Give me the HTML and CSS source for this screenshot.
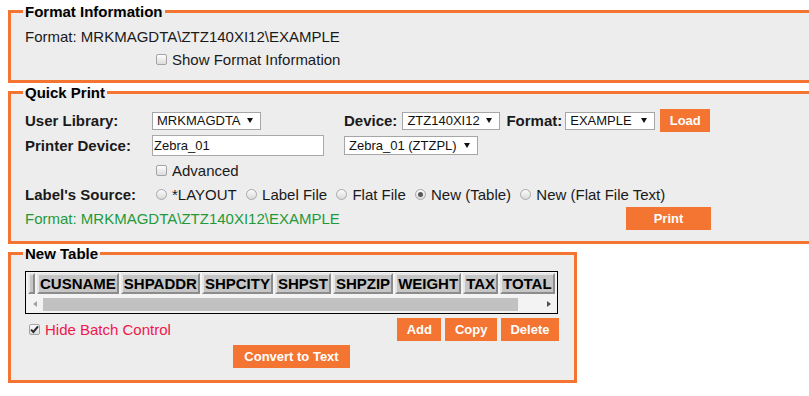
FILE: index.html
```html
<!DOCTYPE html>
<html>
<head>
    <meta charset="utf-8">
    <title>Quick Print</title>
    <link rel="stylesheet" href="styles.css">
</head>
<body>
<fieldset class="box box-wide box-info">
    <legend>Format Information</legend>
    <div class="line">Format: MRKMAGDTA\ZTZ140XI12\EXAMPLE</div>
    <div class="line"><span class="label"></span><span class="check"></span>Show Format Information</div>
</fieldset>

<fieldset class="box box-wide box-print">
    <legend>Quick Print</legend>
    <div class="line row">
        <span class="label">User Library:</span>
        <span class="select sel-lib">MRKMAGDTA</span>
        <span class="label-in dev">Device:</span>
        <span class="select sel-dev">ZTZ140XI12</span>
        <span class="label-in fmt">Format:</span>
        <span class="select sel-fmt">EXAMPLE</span>
        <button class="btn btn-load">Load</button>
    </div>
    <div class="line row">
        <span class="label">Printer Device:</span>
        <span class="text-in">Zebra_01</span>
        <span class="select sel-prt">Zebra_01 (ZTZPL)</span>
    </div>
    <div class="line row short"><span class="label"></span><span class="check"></span>Advanced</div>
    <div class="line row short">
        <span class="label">Label's Source:</span>
        <span class="opt first"><span class="radio"></span>*LAYOUT</span>
        <span class="opt"><span class="radio"></span>Label File</span>
        <span class="opt"><span class="radio"></span>Flat File</span>
        <span class="opt"><span class="radio on"></span>New (Table)</span>
        <span class="opt"><span class="radio"></span>New (Flat File Text)</span>
    </div>
    <div class="line row">
        <span class="ok">Format: MRKMAGDTA\ZTZ140XI12\EXAMPLE</span>
        <button class="btn btn-print">Print</button>
    </div>
</fieldset>

<fieldset class="box box-table">
    <legend>New Table</legend>
    <div class="grid">
        <div class="grid-head">
            <span class="th stub"></span>
            <span class="th">CUSNAME</span>
            <span class="th">SHPADDR</span>
            <span class="th">SHPCITY</span>
            <span class="th">SHPST</span>
            <span class="th">SHPZIP</span>
            <span class="th">WEIGHT</span>
            <span class="th">TAX</span>
            <span class="th">TOTAL</span>
        </div>
        <div class="scroll">
            <span class="scroll-btn"><span class="tri-l"></span></span>
            <span class="thumb"></span>
            <span class="scroll-btn"><span class="tri-r"></span></span>
        </div>
    </div>
    <div class="line batch">
        <span class="check on"><svg width="9" height="9" viewBox="0 0 9 9"><path d="M1 4.6 L3.4 7 L8 1.4" fill="none" stroke="#2b2b2b" stroke-width="2"/></svg></span>
        <span class="warn">Hide Batch Control</span>
        <span class="actions">
            <button class="btn">Add</button>
            <button class="btn">Copy</button>
            <button class="btn">Delete</button>
        </span>
    </div>
    <div class="convert"><button class="btn btn-wide">Convert to Text</button></div>
</fieldset>
</body>
</html>
```

FILE: styles.css
```css
*{box-sizing:border-box;}
html,body{overflow:hidden;}
body{margin:0 0 0 8px;font-family:Arial,"Liberation Sans",sans-serif;font-size:15px;color:#1a1a1a;background:#fff;}

/* fieldsets */
.box{margin:1px 0 0;padding:3px 14px 10px;border:3px solid #f47431;background:#ededed;min-width:0;}
.box legend{font-weight:bold;color:#000;padding:0 2px;margin-left:-2px;}
.box-wide{width:840px;}
.box-info{margin-top:3px;padding-top:4.5px;padding-bottom:9.5px;}
.box-print{padding-top:7px;padding-bottom:10px;}
.box-table{width:569px;padding-top:9px;padding-bottom:12px;}

.line{display:flex;align-items:center;height:23px;white-space:nowrap;}
.row{height:25px;width:686px;}
.row.short{height:24px;}
.label{width:127px;flex:none;font-weight:bold;}
.label-in{font-weight:bold;}
.dev{margin-left:83px;margin-right:5px;}
.fmt{margin-left:6px;margin-right:3px;}

/* form pieces */
.check{width:11px;height:11px;flex:none;margin:0 5px 0 4px;border:1px solid #a3a3a3;border-radius:2px;background:linear-gradient(#fcfcfc,#dddddd);display:flex;align-items:center;justify-content:center;}
.radio{width:11px;height:11px;flex:none;margin-right:5px;border:1px solid #a8a8a8;border-radius:50%;background:linear-gradient(#fbfbfb,#dadada);display:flex;align-items:center;justify-content:center;}
.radio.on::after{content:"";width:5px;height:5px;border-radius:50%;background:#585858;}
.opt{display:flex;align-items:center;margin-right:9.3px;}
.opt.first{margin-left:4px;}

.select{display:flex;align-items:center;justify-content:space-between;height:18px;padding:0 7px 0 4px;border:1px solid #a6a6a6;background:#fff;font-size:13px;color:#111;flex:none;}
.select::after{content:"";border-left:3px solid transparent;border-right:3px solid transparent;border-top:5px solid #111;}
.sel-lib{width:109px;}
.sel-dev{width:98px;}
.sel-fmt{width:90px;}
.sel-prt{width:134px;height:19px;}
.text-in{width:172px;height:21px;margin-right:20px;padding-left:1px;border:1px solid #a9a9a9;background:#fff;font-size:13px;color:#111;display:flex;align-items:center;flex:none;}

.btn{height:23px;padding:0 9.5px;border:0;background:#f47431;color:#fff;font-family:Arial,"Liberation Sans",sans-serif;font-size:13px;font-weight:bold;}
.btn-load{margin-left:5px;}
.btn-print{width:85px;margin-left:auto;}
.btn-wide{padding:0 11px;}
.ok{color:#1f9a3b;}
.warn{color:#f0174b;}

/* table */
.grid{width:533px;border:1px solid #000;background:#f3f3f3;padding-top:1px;overflow:hidden;}
.grid-head{display:flex;gap:2px;padding-left:2px;}
.th{flex:none;height:21px;padding:0 1px;font-weight:bold;color:#000;background:#c6c6c6;border:2px solid;border-color:#e6e6e6 #8c8c8c #8c8c8c #e6e6e6;display:flex;align-items:center;}
.stub{width:7px;}
.scroll{display:flex;align-items:center;height:18px;margin-top:1px;}
.scroll-btn{width:17px;height:17px;flex:none;display:flex;align-items:center;justify-content:center;}
.thumb{width:475px;height:13px;background:#c1c1c1;}
.scroll .scroll-btn:last-child{margin-left:auto;}
.tri-l{border-top:3px solid transparent;border-bottom:3px solid transparent;border-right:4px solid #a3a3a3;}
.tri-r{border-top:3px solid transparent;border-bottom:3px solid transparent;border-left:4px solid #505050;}

.batch{height:23px;margin-top:4px;width:534px;}
.actions{margin-left:auto;display:flex;gap:4px;}
.convert{text-align:center;margin-top:4px;width:533px;}
```
